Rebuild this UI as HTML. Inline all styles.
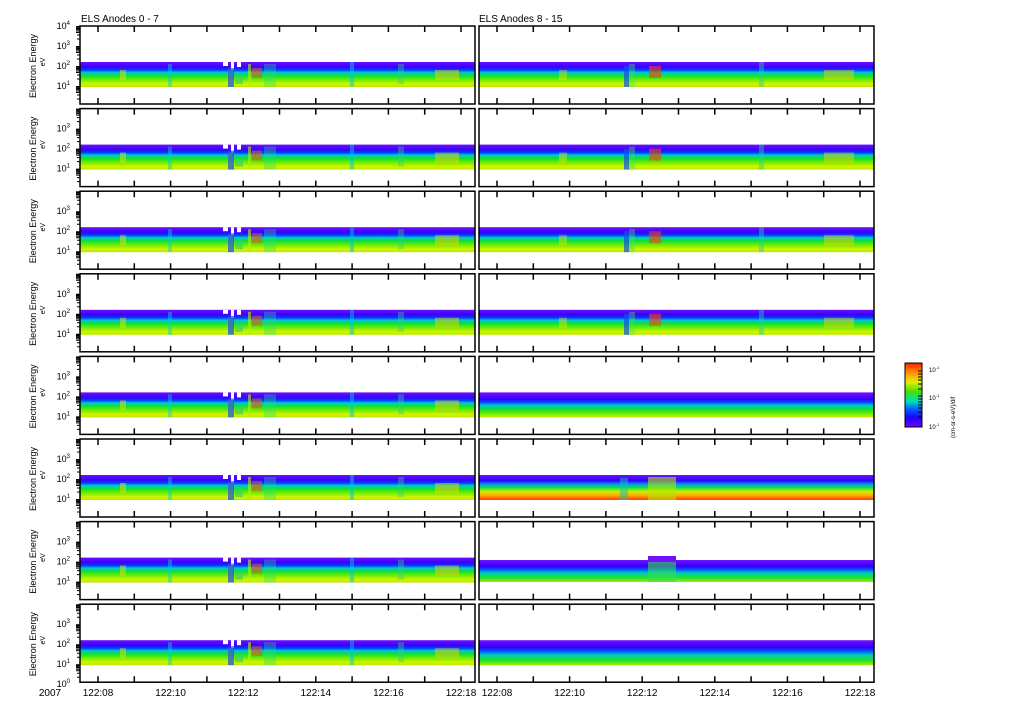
<!DOCTYPE html>
<html><head><meta charset="utf-8"><style>
html,body{margin:0;padding:0;background:#fff;}
svg{display:block;font-family:"Liberation Sans",sans-serif;}
</style></head><body>
<svg width="1024" height="708" viewBox="0 0 1024 708" xmlns="http://www.w3.org/2000/svg">
<defs>
<linearGradient id="gA" x1="0" y1="0" x2="0" y2="1">
<stop offset="0" stop-color="#6a10ff"/><stop offset="0.2" stop-color="#3a00ff"/><stop offset="0.32" stop-color="#0040ff"/><stop offset="0.42" stop-color="#00c8d0"/><stop offset="0.55" stop-color="#10e030"/><stop offset="0.72" stop-color="#70f000"/><stop offset="0.88" stop-color="#d8f000"/><stop offset="1" stop-color="#b0f000"/></linearGradient>
<linearGradient id="gB" x1="0" y1="0" x2="0" y2="1">
<stop offset="0" stop-color="#7010ff"/><stop offset="0.28" stop-color="#3a00ff"/><stop offset="0.4" stop-color="#0050ff"/><stop offset="0.52" stop-color="#00c8c8"/><stop offset="0.68" stop-color="#10e030"/><stop offset="0.88" stop-color="#80f000"/><stop offset="1" stop-color="#d0f000"/></linearGradient>
<linearGradient id="gC" x1="0" y1="0" x2="0" y2="1">
<stop offset="0" stop-color="#7010ff"/><stop offset="0.22" stop-color="#3000ff"/><stop offset="0.38" stop-color="#00a0f0"/><stop offset="0.5" stop-color="#10e040"/><stop offset="0.66" stop-color="#c8f000"/><stop offset="0.8" stop-color="#ffb000"/><stop offset="1" stop-color="#ff4000"/></linearGradient>
<linearGradient id="gD" x1="0" y1="0" x2="0" y2="1">
<stop offset="0" stop-color="#7010ff"/><stop offset="0.3" stop-color="#3000ff"/><stop offset="0.45" stop-color="#0060ff"/><stop offset="0.6" stop-color="#00d0b0"/><stop offset="0.8" stop-color="#20e030"/><stop offset="1" stop-color="#a0f000"/></linearGradient>
<linearGradient id="gCB" x1="0" y1="0" x2="0" y2="1">
<stop offset="0" stop-color="#ff2000"/><stop offset="0.15" stop-color="#ff9000"/><stop offset="0.3" stop-color="#e0f000"/><stop offset="0.45" stop-color="#40e000"/><stop offset="0.6" stop-color="#00e0c0"/><stop offset="0.72" stop-color="#0060ff"/><stop offset="0.85" stop-color="#2000ff"/><stop offset="1" stop-color="#7000ff"/></linearGradient>

<g id="fr">
<rect x="0" y="0" width="395" height="78" fill="none" stroke="#000" stroke-width="1.5"/>
<path stroke="#000" stroke-width="1.5" d="M18 0v6M54.3 0v6M90.6 0v6M126.9 0v6M163.2 0v6M199.5 0v6M235.8 0v6M272.1 0v6M308.4 0v6M344.7 0v6M381 0v6M18 78v-6M54.3 78v-6M90.6 78v-6M126.9 78v-6M163.2 78v-6M199.5 78v-6M235.8 78v-6M272.1 78v-6M308.4 78v-6M344.7 78v-6M381 78v-6"/>
</g>
<g id="yax">
<path stroke="#000" stroke-width="1" d="M-4 0.5h4M-4 1.4h4M-4 2.5h4M-4 3.6h4M-4 5h4M-4 6.5h4M-3 9h3M-3 13h3M-4 20.5h4M-4 21.4h4M-4 22.5h4M-4 23.6h4M-4 25h4M-4 26.5h4M-3 29h3M-3 33h3M-4 40.5h4M-4 41.4h4M-4 42.5h4M-4 43.6h4M-4 45h4M-4 46.5h4M-3 49h3M-3 53h3M-4 60.5h4M-4 61.4h4M-4 62.5h4M-4 63.6h4M-4 65h4M-4 66.5h4M-3 69h3M-3 73h3"/>
<text x="-40" y="-44" font-size="9" transform="rotate(-90)" text-anchor="middle">Electron Energy</text>
<text x="-36" y="-35" font-size="7" transform="rotate(-90)" text-anchor="middle">eV</text>
</g>
<g id="featL">
<rect x="40" y="44" width="6" height="10" fill="#e8e000" opacity="0.5"/>
<rect x="88" y="38" width="4" height="23" fill="#00d0d0" opacity="0.45"/>
<rect x="148" y="44" width="5" height="14" fill="#ffe000" opacity="0.5"/>
<rect x="270" y="36" width="4" height="25" fill="#00c0f0" opacity="0.5"/>
<rect x="318" y="38" width="6" height="20" fill="#30d080" opacity="0.4"/>
<rect x="355" y="44" width="24" height="10" fill="#f0d000" opacity="0.5"/>
<rect x="143" y="36" width="5" height="4" fill="#fff"/>
<rect x="151" y="36" width="3" height="8" fill="#fff"/>
<rect x="157" y="36" width="4" height="5" fill="#fff"/>
<rect x="148" y="42" width="6" height="19" fill="#1050f0" opacity="0.7"/>
<rect x="155" y="50" width="8" height="8" fill="#40d060" opacity="0.7"/>
<rect x="172" y="42" width="10" height="10" fill="#ff5000" opacity="0.55"/>
<rect x="168" y="38" width="3" height="23" fill="#b0f000" opacity="0.6"/>
<rect x="184" y="38" width="12" height="23" fill="#20e080" opacity="0.35"/>
</g>
<g id="featR">
<rect x="80" y="44" width="8" height="10" fill="#ffe000" opacity="0.4"/>
<rect x="145" y="40" width="5" height="21" fill="#1050f0" opacity="0.7"/>
<rect x="150" y="38" width="6" height="23" fill="#40e060" opacity="0.4"/>
<rect x="170" y="40" width="12" height="12" fill="#ff4000" opacity="0.6"/>
<rect x="280" y="36" width="5" height="25" fill="#20d0a0" opacity="0.45"/>
<rect x="345" y="44" width="30" height="10" fill="#f0d000" opacity="0.5"/>
</g>
</defs>

<text x="81" y="22" font-size="10">ELS Anodes 0 - 7</text>
<text x="479" y="22" font-size="10">ELS Anodes 8 - 15</text>

<g>
<rect x="80" y="62" width="395" height="25" fill="url(#gA)"/><use href="#featL" x="80" y="26"/>
<rect x="80" y="144.6" width="395" height="25" fill="url(#gA)"/><use href="#featL" x="80" y="108.6"/>
<rect x="80" y="227.2" width="395" height="25" fill="url(#gA)"/><use href="#featL" x="80" y="191.2"/>
<rect x="80" y="309.8" width="395" height="25" fill="url(#gA)"/><use href="#featL" x="80" y="273.8"/>
<rect x="80" y="392.4" width="395" height="25" fill="url(#gA)"/><use href="#featL" x="80" y="356.4"/>
<rect x="80" y="475" width="395" height="25" fill="url(#gA)"/><use href="#featL" x="80" y="439"/>
<rect x="80" y="557.6" width="395" height="25" fill="url(#gA)"/><use href="#featL" x="80" y="521.6"/>
<rect x="80" y="640.2" width="395" height="25" fill="url(#gA)"/><use href="#featL" x="80" y="604.2"/>
</g>
<g>
<rect x="479" y="62" width="395" height="25" fill="url(#gA)"/><use href="#featR" x="479" y="26"/>
<rect x="479" y="144.6" width="395" height="25" fill="url(#gA)"/><use href="#featR" x="479" y="108.6"/>
<rect x="479" y="227.2" width="395" height="25" fill="url(#gA)"/><use href="#featR" x="479" y="191.2"/>
<rect x="479" y="309.8" width="395" height="25" fill="url(#gA)"/><use href="#featR" x="479" y="273.8"/>
<rect x="479" y="392.4" width="395" height="25" fill="url(#gB)"/>
<rect x="479" y="475" width="395" height="25" fill="url(#gC)"/>
<rect x="479" y="560" width="395" height="22" fill="url(#gD)"/>
<rect x="479" y="640.2" width="395" height="25" fill="url(#gD)"/>
<rect x="620" y="478" width="8" height="22" fill="#10c0c0" opacity="0.5"/>
<rect x="648" y="477" width="28" height="23" fill="#b0e800" opacity="0.6"/>
<rect x="648" y="562" width="28" height="20" fill="#30e050" opacity="0.6"/>
<rect x="648" y="556" width="28" height="6" fill="#7010ff"/>
</g>

<g>
<use href="#fr" x="80" y="26"/><use href="#fr" x="80" y="108.6"/><use href="#fr" x="80" y="191.2"/><use href="#fr" x="80" y="273.8"/>
<use href="#fr" x="80" y="356.4"/><use href="#fr" x="80" y="439"/><use href="#fr" x="80" y="521.6"/><use href="#fr" x="80" y="604.2"/>
<use href="#fr" x="479" y="26"/><use href="#fr" x="479" y="108.6"/><use href="#fr" x="479" y="191.2"/><use href="#fr" x="479" y="273.8"/>
<use href="#fr" x="479" y="356.4"/><use href="#fr" x="479" y="439"/><use href="#fr" x="479" y="521.6"/><use href="#fr" x="479" y="604.2"/>
</g>

<g>
<use href="#yax" x="80" y="26"/><use href="#yax" x="80" y="108.6"/><use href="#yax" x="80" y="191.2"/><use href="#yax" x="80" y="273.8"/>
<use href="#yax" x="80" y="356.4"/><use href="#yax" x="80" y="439"/><use href="#yax" x="80" y="521.6"/><use href="#yax" x="80" y="604.2"/>
</g>
<g font-size="9" text-anchor="end">
<text x="70" y="29">10<tspan font-size="6" dy="-4">4</tspan></text>
<text x="70" y="49">10<tspan font-size="6" dy="-4">3</tspan></text>
<text x="70" y="69">10<tspan font-size="6" dy="-4">2</tspan></text>
<text x="70" y="89">10<tspan font-size="6" dy="-4">1</tspan></text>
<text x="70" y="131.6">10<tspan font-size="6" dy="-4">3</tspan></text><text x="70" y="151.6">10<tspan font-size="6" dy="-4">2</tspan></text><text x="70" y="171.6">10<tspan font-size="6" dy="-4">1</tspan></text>
<text x="70" y="214.2">10<tspan font-size="6" dy="-4">3</tspan></text><text x="70" y="234.2">10<tspan font-size="6" dy="-4">2</tspan></text><text x="70" y="254.2">10<tspan font-size="6" dy="-4">1</tspan></text>
<text x="70" y="296.8">10<tspan font-size="6" dy="-4">3</tspan></text><text x="70" y="316.8">10<tspan font-size="6" dy="-4">2</tspan></text><text x="70" y="336.8">10<tspan font-size="6" dy="-4">1</tspan></text>
<text x="70" y="379.4">10<tspan font-size="6" dy="-4">3</tspan></text><text x="70" y="399.4">10<tspan font-size="6" dy="-4">2</tspan></text><text x="70" y="419.4">10<tspan font-size="6" dy="-4">1</tspan></text>
<text x="70" y="462">10<tspan font-size="6" dy="-4">3</tspan></text><text x="70" y="482">10<tspan font-size="6" dy="-4">2</tspan></text><text x="70" y="502">10<tspan font-size="6" dy="-4">1</tspan></text>
<text x="70" y="544.6">10<tspan font-size="6" dy="-4">3</tspan></text><text x="70" y="564.6">10<tspan font-size="6" dy="-4">2</tspan></text><text x="70" y="584.6">10<tspan font-size="6" dy="-4">1</tspan></text>
<text x="70" y="627.2">10<tspan font-size="6" dy="-4">3</tspan></text><text x="70" y="647.2">10<tspan font-size="6" dy="-4">2</tspan></text><text x="70" y="667.2">10<tspan font-size="6" dy="-4">1</tspan></text>
<text x="70" y="687.2">10<tspan font-size="6" dy="-4">0</tspan></text>
</g>

<g font-size="10" text-anchor="middle">
<text x="50" y="696">2007</text>
<text x="98" y="696">122:08</text><text x="170.6" y="696">122:10</text><text x="243.2" y="696">122:12</text><text x="315.8" y="696">122:14</text><text x="388.4" y="696">122:16</text><text x="461" y="696">122:18</text>
<text x="497" y="696">122:08</text><text x="569.6" y="696">122:10</text><text x="642.2" y="696">122:12</text><text x="714.8" y="696">122:14</text><text x="787.4" y="696">122:16</text><text x="860" y="696">122:18</text>
</g>

<rect x="905" y="363" width="17" height="64" fill="url(#gCB)" stroke="#000" stroke-width="1"/>
<path stroke="#000" stroke-width="1" d="M918 371h4M918 374h4M918 377h4M918 380h4M918 384h4M918 389h4M918 396h4M918 399h4M918 402h4M918 405h4M918 408h4M918 412h4M918 417h4"/>
<g font-size="6"><text x="929" y="372">10<tspan dy="-3" font-size="4">-1</tspan></text><text x="929" y="400">10<tspan dy="-3" font-size="4">-1</tspan></text><text x="929" y="429">10<tspan dy="-3" font-size="4">-1</tspan></text></g>
<text x="0" y="0" font-size="6" transform="translate(955,438) rotate(-90)">(cm-sr-s-eV)/dif</text>
</svg>
</body></html>
